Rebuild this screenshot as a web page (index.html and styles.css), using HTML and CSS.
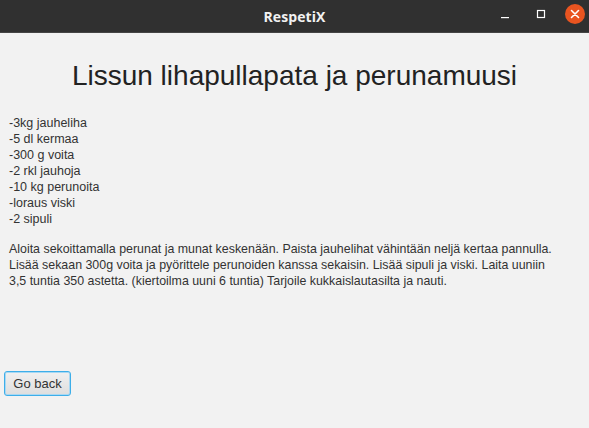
FILE: index.html
```html
<!DOCTYPE html>
<html>
<head>
<meta charset="utf-8">
<link rel="stylesheet" href="styles.css">
</head>
<body>
<div class="window">
  <header class="titlebar">
    <span class="wtitle">RespetiX</span>
    <div class="controls">
      <span class="ctl min"><svg width="10" height="10" viewBox="0 0 10 10"><rect x="1" y="8" width="8" height="1.2" fill="#fff"/></svg></span>
      <span class="ctl max"><svg width="10" height="10" viewBox="0 0 10 10"><rect x="1.5" y="1.5" width="7" height="7" fill="none" stroke="#fff" stroke-width="1.2"/></svg></span>
      <span class="ctl close"><svg width="20" height="20" viewBox="0 0 20 20"><circle cx="10" cy="10" r="10" fill="#e95420"/><path d="M6.5 6.5 L13.5 13.5 M13.5 6.5 L6.5 13.5" stroke="#fff" stroke-width="1.6" stroke-linecap="round"/></svg></span>
    </div>
  </header>
  <main class="content">
    <h1 class="title">Lissun lihapullapata ja perunamuusi</h1>
    <div class="ingredients">
      <div>-3kg jauheliha</div>
      <div>-5 dl kermaa</div>
      <div>-300 g voita</div>
      <div>-2 rkl jauhoja</div>
      <div>-10 kg perunoita</div>
      <div>-loraus viski</div>
      <div>-2 sipuli</div>
    </div>
    <p class="steps">Aloita sekoittamalla perunat ja munat keskenään. Paista jauhelihat vähintään neljä kertaa pannulla. Lisää sekaan 300g voita ja pyörittele perunoiden kanssa sekaisin. Lisää sipuli ja viski. Laita uuniin <span class="nw">3,5 tuntia</span> 350 astetta. (kiertoilma uuni 6 tuntia) Tarjoile kukkaislautasilta ja nauti.</p>
    <div class="actions"><button class="back">Go back</button></div>
  </main>
</div>
</body>
</html>
```

FILE: styles.css
```css
html, body { margin: 0; padding: 0; }
body { width: 589px; height: 428px; overflow: hidden; background: #f2f2f2; font-family: "Liberation Sans", Arial, sans-serif; }
.window { display: flex; flex-direction: column; height: 428px; }
.titlebar { height: 32px; background: #303030; border-bottom: 1px solid #454545; position: relative; display: flex; align-items: center; justify-content: center; flex: none; }
.wtitle { color: #f2f2f2; font-family: "Open Sans", "Noto Sans", sans-serif; font-weight: 700; font-size: 14px; letter-spacing: 0.1px; margin-left: 0; }
.controls { position: absolute; right: 4px; top: 4px; display: flex; align-items: center; height: 20px; }
.ctl { display: flex; align-items: center; justify-content: center; }
.min { width: 10px; margin-right: 26px; }
.max { width: 10px; margin-right: 19px; }
.close { width: 20px; }
.content { padding: 0 9px; color: #333; }
.title { font-weight: 400; font-size: 28px; text-align: center; margin: 26px 0 0; line-height: 34px; color: #222; }
.ingredients { margin-top: 22px; font-size: 12.5px; line-height: 16px; }
.steps { margin: 14px 0 0; font-size: 12.4px; line-height: 16px; }
.nw { white-space: nowrap; }
.actions { margin-top: 82px; margin-left: -5px; }
.back { font-family: "Liberation Sans", Arial, sans-serif; font-size: 13px; color: #333; width: 67px; height: 25px; padding: 0; border: 1px solid #3daee9; border-radius: 3px; background: linear-gradient(#f0f0f0, #dedede); box-shadow: inset 0 0 0 1px #a8d8f3; }
```
